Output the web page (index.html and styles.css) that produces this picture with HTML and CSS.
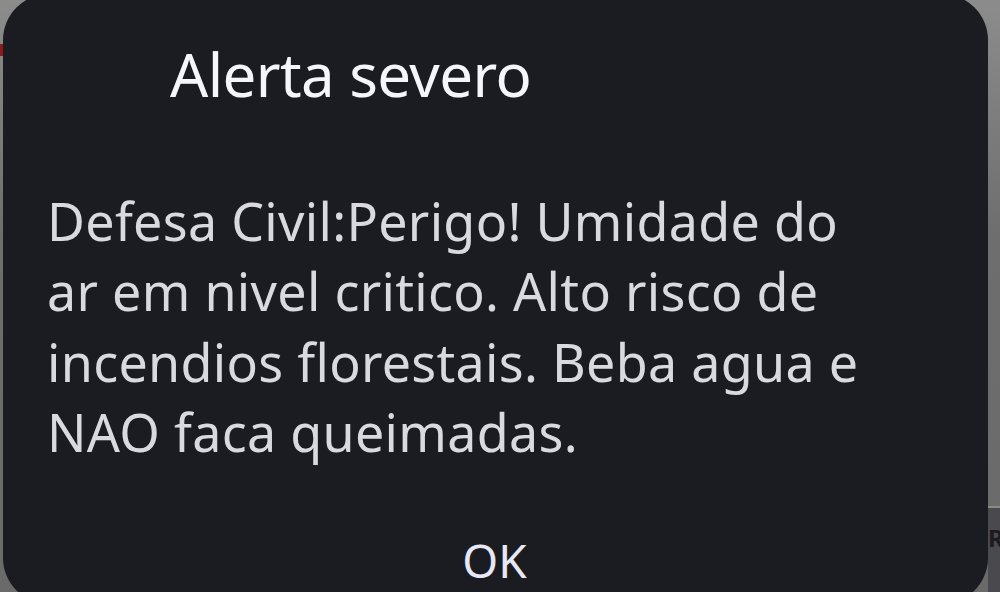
FILE: index.html
```
<!DOCTYPE html>
<html lang="pt">
<head>
<meta charset="utf-8">
<title>Alerta severo</title>
<link rel="stylesheet" href="styles.css">
</head>
<body>
<div class="screen">
  <div class="edge-mark"></div>
  <div class="dialog">
    <h1 class="title">Alerta severo</h1>
    <p class="message">Defesa Civil:Perigo! Umidade do<br>ar em nivel critico. Alto risco de<br>incendios florestais. Beba agua e<br>NAO faca queimadas.</p>
    <div class="actions"><button class="ok">OK</button></div>
  </div>
  <div class="behind">R</div>
</div>
</body>
</html>
```
FILE: styles.css
```
html, body {
  margin: 0;
  padding: 0;
}
body {
  width: 1000px;
  height: 592px;
  overflow: hidden;
  background: linear-gradient(180deg, #8c8c8c 0%, #6e6e6e 40%, #6a6a6a 100%);
  font-family: "Noto Sans", Roboto, sans-serif;
  font-variant-ligatures: none;
}
.screen {
  position: relative;
  width: 1000px;
  height: 592px;
  overflow: hidden;
}
.edge-mark {
  position: absolute;
  left: 0;
  top: 44px;
  width: 3px;
  height: 12px;
  background: #8a1a1a;
}
.behind {
  position: absolute;
  right: -8px;
  top: 506px;
  width: 20px;
  height: 100px;
  background: #4a4a4e;
  color: #1c1c20;
  font-size: 24px;
  font-weight: 700;
  line-height: 40px;
  padding-top: 10px;
  box-sizing: border-box;
  border-top: 2px solid #8a8a8a;
}
.dialog {
  position: relative;
  z-index: 1;
  margin-left: 3px;
  margin-top: -6px;
  width: 985px;
  height: 610px;
  box-sizing: border-box;
  background: #1b1c21;
  border-radius: 46px;
  display: flex;
  flex-direction: column;
}
.title {
  margin: 0;
  padding: 44px 0 0 167px;
  font-size: 60px;
  font-weight: 400;
  letter-spacing: -0.6px;
  line-height: 72px;
  color: #f6f6fa;
}
.message {
  margin: 0;
  padding: 76px 0 0 44px;
  font-size: 52px;
  letter-spacing: 0.3px;
  line-height: 70.3px;
  color: #d9d9df;
}
.actions {
  display: flex;
  justify-content: center;
  padding-top: 66px;
}
.ok {
  background: none;
  border: 0;
  padding: 0;
  margin-left: -2px;
  font-family: inherit;
  font-size: 46px;
  line-height: 54px;
  color: #e6e8f6;
}
```
